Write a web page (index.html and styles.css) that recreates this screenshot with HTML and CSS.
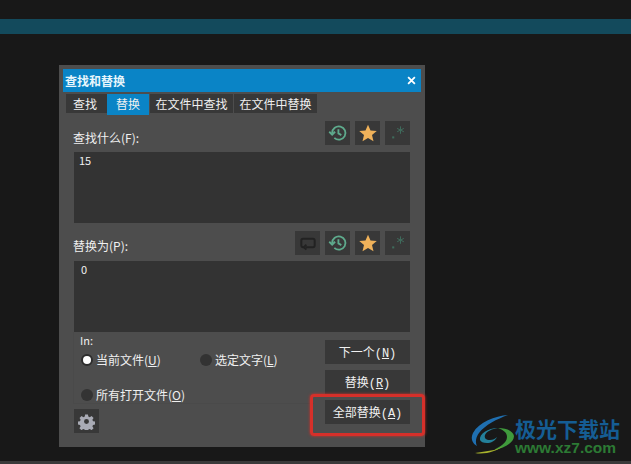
FILE: index.html
```html
<!DOCTYPE html>
<html lang="zh-CN">
<head>
    <meta charset="UTF-8">
    <title>查找和替换</title>
    <link rel="stylesheet" href="styles.css">
</head>
<body>
    <div class="top-bar"></div>

    <div class="dialog">
        <div class="title-bar">
            <span>查找和替换</span>
            <svg class="close-icon" viewBox="0 0 8 8"><path d="M1 1 7 7M7 1 1 7"/></svg>
        </div>

        <div class="tabs">
            <div class="tab tab-short">查找</div>
            <div class="tab tab-short active">替换</div>
            <div class="tab">在文件中查找</div>
            <div class="tab">在文件中替换</div>
        </div>

        <div class="body">
            <!-- Find -->
            <div class="field-head find-head">
                <label>查找什么(F):</label>
                <div class="tools">
                    <div class="tool">
                        <svg viewBox="0 0 24 24" class="icon-history"><path d="M5 12a8 8 0 1 1 2.6 5.9"/><path d="M1.5 10.5 5 14l3.5-3.5"/><path d="M12.5 7.5v5l3.5 2"/></svg>
                    </div>
                    <div class="tool">
                        <svg viewBox="0 0 24 24" class="icon-star"><path d="M12 2l3 6.9 7.5.7-5.7 4.9 1.8 7.3-6.6-3.9-6.6 3.9 1.8-7.3L1.5 9.6l7.5-.7z"/></svg>
                    </div>
                    <div class="tool">
                        <svg viewBox="0 0 24 24" class="icon-regex"><rect x="5" y="16" width="2.5" height="2.5"/><path d="M15 4v9M11 6.5l8 4M19 6.5l-8 4"/></svg>
                    </div>
                </div>
            </div>
            <div class="text-box">15</div>

            <!-- Replace -->
            <div class="field-head replace-head">
                <label>替换为(P):</label>
                <div class="tools">
                    <div class="tool">
                        <svg viewBox="0 0 24 24" class="icon-loop"><path d="M7 17H6a2 2 0 0 1-2-2V9a2 2 0 0 1 2-2h12a2 2 0 0 1 2 2v6a2 2 0 0 1-2 2H9"/><path d="M10 14l-3 3 3 3"/></svg>
                    </div>
                    <div class="tool">
                        <svg viewBox="0 0 24 24" class="icon-history"><path d="M5 12a8 8 0 1 1 2.6 5.9"/><path d="M1.5 10.5 5 14l3.5-3.5"/><path d="M12.5 7.5v5l3.5 2"/></svg>
                    </div>
                    <div class="tool">
                        <svg viewBox="0 0 24 24" class="icon-star"><path d="M12 2l3 6.9 7.5.7-5.7 4.9 1.8 7.3-6.6-3.9-6.6 3.9 1.8-7.3L1.5 9.6l7.5-.7z"/></svg>
                    </div>
                    <div class="tool">
                        <svg viewBox="0 0 24 24" class="icon-regex"><rect x="5" y="16" width="2.5" height="2.5"/><path d="M15 4v9M11 6.5l8 4M19 6.5l-8 4"/></svg>
                    </div>
                </div>
            </div>
            <div class="text-box replace-box">0</div>

            <!-- Scope and actions -->
            <div class="bottom">
                <div class="scope">
                    <div class="scope-group">
                        <div class="in-label">In:</div>
                        <div class="radio-row">
                            <div class="radio-item first"><span class="radio checked"></span><span>当前文件(<u>U</u>)</span></div>
                            <div class="radio-item"><span class="radio"></span><span>选定文字(<u>L</u>)</span></div>
                        </div>
                        <div class="radio-row second">
                            <div class="radio-item"><span class="radio"></span><span>所有打开文件(<u>O</u>)</span></div>
                        </div>
                    </div>
                    <div class="tool gear">
                        <svg viewBox="0 0 24 24"><path fill-rule="evenodd" d="M10 2h4l.6 3 2 .9 2.6-1.7 2.8 2.8-1.7 2.6.9 2 3 .6v4l-3 .6-.9 2 1.7 2.6-2.8 2.8-2.6-1.7-2 .9-.6 3h-4l-.6-3-2-.9-2.6 1.7-2.8-2.8 1.7-2.6-.9-2-3-.6v-4l3-.6.9-2L2.2 7 5 4.200l2.600 1.700 2-.9zM12 8.500a3.500 3.500 0 1 0 0 7 3.500 3.500 0 0 0 0-7z"/></svg>
                    </div>
                </div>
                <div class="actions">
                    <button>下一个(<u>N</u>)</button>
                    <button>替换(<u>R</u>)</button>
                    <button>全部替换(<u>A</u>)</button>
                </div>
            </div>
        </div>
    </div>

    <!-- Red annotation over the button -->
    <div class="highlight"></div>

    <!-- Watermark -->
    <div class="watermark">
        <svg viewBox="0 0 50 50" class="wm-logo">
            <path class="swirl-blue" d="M43 7C30 8 14 14 8 25c-3 6 0 11 4 13-2-4-1-9 2-13C20 17 32 11 43 7z"/>
            <path class="swirl-teal" d="M15 32c-1-6 8-12 18-12-6 1-11 3-13 7-1 3 1 5 5 5 3 0 5-1 7-3-2 4-6 6-10 6-4 0-6-1-7-3z"/>
            <path class="swirl-green" d="M33 20c9 0 15 3 16 8 0 7-10 12-20 14 5-3 13-7 13-13 0-5-4-7-9-9z"/>
            <path class="swirl-yellow" d="M10 45c7-1 13-2 19-3 3-1 6-2 9-4-6 5-18 9-28 7z"/>
        </svg>
        <div class="wm-text">
            <div class="wm-name">极光下载站</div>
            <div class="wm-url">www.xz7.com</div>
        </div>
    </div>

    <div class="bottom-strip"></div>
</body>
</html>
```

FILE: styles.css
```css
* {
    box-sizing: border-box;
}
body {
    margin: 0;
    padding: 19px 0 0;
    height: 464px;
    overflow: hidden;
    background-color: #181818;
    color: #f0f0f0;
    font-family: "Noto Sans CJK SC", "Liberation Sans", sans-serif;
    font-size: 12px;
    position: relative;
}
.top-bar {
    height: 15px;
    background-color: #134a5c;
}

/* Dialog */
.dialog {
    width: 366px;
    height: 382px;
    margin: 31px 0 0 59px;
    padding: 4px;
    background-color: #4d4d4d;
}
.title-bar {
    display: flex;
    align-items: center;
    justify-content: space-between;
    height: 23px;
    padding: 0 5px 0 2px;
    background-color: #0a84c6;
    color: #e8f6fc;
    font-weight: bold;
    line-height: 23px;
}
.close-icon {
    width: 9px;
    height: 9px;
    fill: none;
    stroke: #fff;
    stroke-width: 1.6;
}
.tabs {
    display: flex;
    gap: 1px;
    height: 21px;
    padding: 2px 0 0 3px;
}
.tab {
    width: 83px;
    height: 19px;
    background-color: #383838;
    line-height: 19px;
    text-align: center;
    white-space: nowrap;
}
.tab-short {
    width: 41px;
    padding-right: 3px;
}
.tab.active {
    height: 21px;
    background-color: #0a84c6;
    margin-left: -1px;
    width: 42px;
    padding-right: 0;
}

.body {
    padding: 0 11px;
}
.field-head {
    display: flex;
    align-items: center;
    justify-content: space-between;
    height: 24px;
}
.find-head {
    margin-top: 8px;
    margin-bottom: 7px;
}
.find-head label {
    margin-top: 9px;
}
.replace-head {
    margin-top: 8px;
    margin-bottom: 6px;
}
.replace-head label {
    margin-top: 5px;
}
.field-head label {
    margin-left: -1px;
}
.tools {
    display: flex;
    gap: 5px;
}
.tool {
    display: flex;
    align-items: center;
    justify-content: center;
    width: 25px;
    height: 24px;
    background-color: #383838;
}
.tool svg {
    width: 20px;
    height: 20px;
}
.icon-history {
    fill: none;
    stroke: #5eab8d;
    stroke-width: 2.2;
}
.icon-star {
    fill: #f0b25a;
}
.icon-regex {
    fill: #3f6b5c;
    stroke: #3f6b5c;
    stroke-width: 1.2;
}
.icon-regex rect {
    stroke: none;
}
.icon-loop {
    fill: none;
    stroke: #222;
    stroke-width: 2.4;
}
.text-box {
    height: 71px;
    padding: 0 5px;
    background-color: #333;
    font-size: 11px;
    line-height: 17px;
}
.replace-box {
    padding-left: 7px;
}

/* Scope and actions */
.bottom {
    display: flex;
    justify-content: space-between;
}
.scope {
    width: 240px;
}
.scope-group {
    height: 72px;
    margin-left: -1px;
    border-left: 1px solid #4a4a4a;
    border-bottom: 1px solid #4a4a4a;
}
.in-label {
    margin-left: 6px;
    height: 19px;
    line-height: 17px;
    font-size: 11px;
}
.radio-row {
    display: flex;
    height: 18px;
    margin-left: 7px;
}
.radio-row.second {
    margin-top: 17px;
}
.radio-item {
    display: flex;
    align-items: center;
    gap: 3px;
    line-height: 18px;
    white-space: nowrap;
}
.radio-item.first {
    width: 119px;
}
.radio-item u {
    text-underline-offset: 1px;
}
.radio {
    width: 12px;
    height: 12px;
    border-radius: 50%;
    background-color: #333;
}
.radio.checked {
    background-color: #fff;
    border: 2px solid #2d2d2d;
}
.gear {
    margin-top: 5px;
}
.gear svg {
    width: 17px;
    height: 17px;
    fill: #a9abb5;
}
.actions {
    display: flex;
    flex-direction: column;
    gap: 6px;
    padding-top: 8px;
}
.actions button {
    width: 85px;
    height: 24px;
    padding: 0;
    border: none;
    background-color: #383838;
    color: #f0f0f0;
    font-family: "Liberation Mono", "Noto Sans CJK SC", monospace;
    font-size: 12px;
}

/* Overlays */
.highlight {
    position: absolute;
    left: 310px;
    top: 394px;
    width: 115px;
    height: 42px;
    border: 3px solid #d6302a;
    border-radius: 4px;
    box-shadow: 0 0 3px #d6302a;
}
.watermark {
    position: absolute;
    left: 465px;
    top: 408px;
    display: flex;
}
.wm-logo {
    width: 50px;
    height: 50px;
}
.swirl-blue {
    fill: #1f6fb0;
}
.swirl-teal {
    fill: #23809a;
}
.swirl-green {
    fill: #3f9a3c;
}
.swirl-yellow {
    fill: #a8b32c;
}
.wm-text {
    margin-top: 8px;
}
.wm-name {
    color: #155d94;
    font-size: 21px;
    font-weight: bold;
    line-height: 24px;
    white-space: nowrap;
}
.wm-url {
    color: #2c7a34;
    font-family: "Liberation Sans", sans-serif;
    font-size: 15.5px;
    font-weight: bold;
    line-height: 16px;
}
.bottom-strip {
    position: absolute;
    left: 0;
    right: 0;
    bottom: 0;
    height: 3px;
    background-color: #3a3a3a;
}
```
